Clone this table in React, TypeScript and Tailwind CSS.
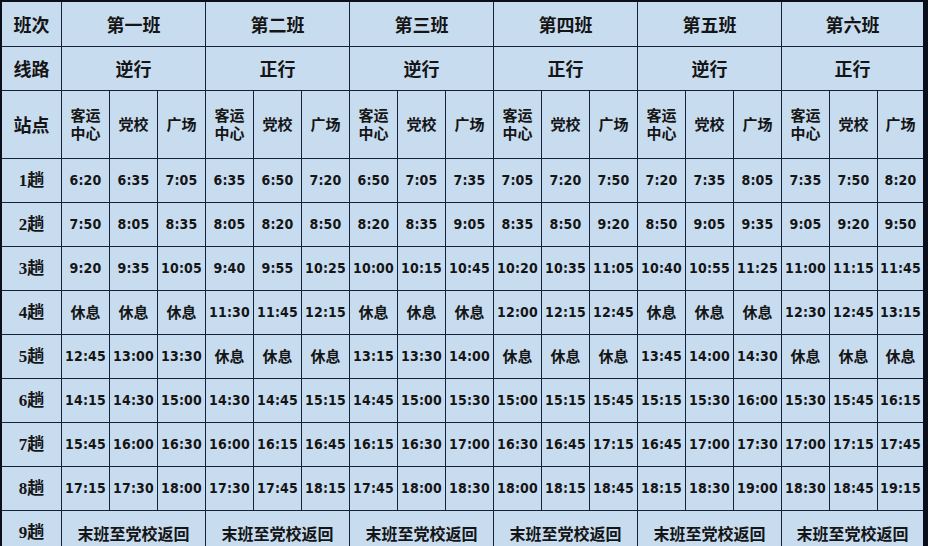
import React from "react";

const classes = ["第一班", "第二班", "第三班", "第四班", "第五班", "第六班"];
const dirs = ["逆行", "正行", "逆行", "正行", "逆行", "正行"];
const R = "休息";
const rows: string[][] = [
  ["6:20","6:35","7:05","6:35","6:50","7:20","6:50","7:05","7:35","7:05","7:20","7:50","7:20","7:35","8:05","7:35","7:50","8:20"],
  ["7:50","8:05","8:35","8:05","8:20","8:50","8:20","8:35","9:05","8:35","8:50","9:20","8:50","9:05","9:35","9:05","9:20","9:50"],
  ["9:20","9:35","10:05","9:40","9:55","10:25","10:00","10:15","10:45","10:20","10:35","11:05","10:40","10:55","11:25","11:00","11:15","11:45"],
  [R,R,R,"11:30","11:45","12:15",R,R,R,"12:00","12:15","12:45",R,R,R,"12:30","12:45","13:15"],
  ["12:45","13:00","13:30",R,R,R,"13:15","13:30","14:00",R,R,R,"13:45","14:00","14:30",R,R,R],
  ["14:15","14:30","15:00","14:30","14:45","15:15","14:45","15:00","15:30","15:00","15:15","15:45","15:15","15:30","16:00","15:30","15:45","16:15"],
  ["15:45","16:00","16:30","16:00","16:15","16:45","16:15","16:30","17:00","16:30","16:45","17:15","16:45","17:00","17:30","17:00","17:15","17:45"],
  ["17:15","17:30","18:00","17:30","17:45","18:15","17:45","18:00","18:30","18:00","18:15","18:45","18:15","18:30","19:00","18:30","18:45","19:15"],
];

const cell = "bg-[#c8dcf0] flex items-center justify-center text-[#151515]";
const cjk = "font-['Noto_Sans_CJK_SC',sans-serif] font-bold";
const stack = "font-['Liberation_Sans','Noto_Sans_CJK_SC',sans-serif] font-bold";
const num = "font-['DejaVu_Sans_Condensed','DejaVu_Sans',sans-serif] font-bold text-[14px] tracking-[0.2px]";
const lbl = "font-['Liberation_Serif','Noto_Sans_CJK_SC',serif] font-semibold text-[17px]";

export default function App() {
  return (
    <div className="w-[928px] h-[546px] overflow-hidden bg-[#0b0f1c] pl-[2px] pt-[2px] pr-[5px]">
      <div className="grid grid-cols-[59px_repeat(17,47px)_45px] grid-rows-[44px_43px_67px_repeat(9,43px)] gap-px bg-[#16203a] pb-px">
        <div className={`${cell} ${cjk} text-[18px]`}>班次</div>
        {classes.map((c) => (
          <div key={c} className={`${cell} ${cjk} col-span-3 text-[18px]`}>{c}</div>
        ))}
        <div className={`${cell} ${cjk} text-[18px]`}>线路</div>
        {dirs.map((d, i) => (
          <div key={i} className={`${cell} ${cjk} col-span-3 text-[18px]`}>{d}</div>
        ))}
        <div className={`${cell} ${cjk} text-[18px]`}>站点</div>
        {classes.map((c) => (
          <React.Fragment key={c}>
            <div className={`${cell} ${stack} flex-col text-[15px] leading-[18px]`}>
              <span>客运</span>
              <span>中心</span>
            </div>
            <div className={`${cell} ${cjk} text-[15px]`}>党校</div>
            <div className={`${cell} ${cjk} text-[15px]`}>广场</div>
          </React.Fragment>
        ))}
        {rows.map((r, ri) => (
          <React.Fragment key={ri}>
            <div className={`${cell} ${lbl}`}>{ri + 1}趟</div>
            {r.map((v, ci) =>
              v === R ? (
                <div key={ci} className={`${cell} ${cjk} text-[15px]`}>{v}</div>
              ) : (
                <div key={ci} className={`${cell} ${num}`}>{v}</div>
              )
            )}
          </React.Fragment>
        ))}
        <div className={`${cell} ${lbl}`}>9趟</div>
        {classes.map((c) => (
          <div key={c} className={`${cell} ${cjk} col-span-3 text-[16px]`}>末班至党校返回</div>
        ))}
      </div>
    </div>
  );
}
